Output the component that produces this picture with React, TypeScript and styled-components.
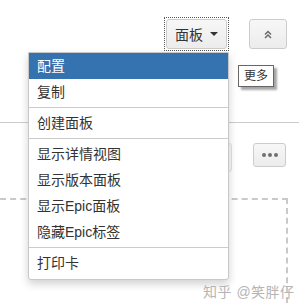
import React, { FC } from 'react';
import styled, { createGlobalStyle } from 'styled-components';

const GlobalStyle = createGlobalStyle`
    body {
        margin: 0;
        background: #ffffff;
        font-family: "Liberation Sans", "Noto Sans CJK SC", Arial, sans-serif;
        color: #333333;
    }
`;

const Page = styled.div`
    position: relative;
    width: 299px;
    height: 305px;
    overflow: hidden;
`;

const Header = styled.div`
    display: flex;
    justify-content: flex-end;
    align-items: flex-start;
    gap: 21px;
    height: 103px;
    padding: 19px 12px 0 0;
    border-bottom: 1px solid #cccccc;
`;

const Button = styled.button<{ $w: number; $h: number }>`
    box-sizing: border-box;
    width: ${(p) => p.$w}px;
    height: ${(p) => p.$h}px;
    display: flex;
    align-items: center;
    justify-content: center;
    gap: 7px;
    padding: 0;
    border: 1px solid #cccccc;
    border-radius: 3px;
    background: linear-gradient(#f7f7f7, #ececec);
    color: #333333;
    font-family: inherit;
    font-size: 14px;
`;

const Focused = styled.div`
    padding: 1px;
    margin-top: -1px;
    outline: 1px dotted #555555;
`;

const Caret = styled.span`
    width: 0;
    height: 0;
    border-left: 4px solid transparent;
    border-right: 4px solid transparent;
    border-top: 4px solid #333333;
`;

const Toolbar = styled.div`
    display: flex;
    justify-content: flex-end;
    align-items: flex-start;
    gap: 21px;
    padding: 20px 13px 0 0;
`;

const GhostInput = styled.div`
    box-sizing: border-box;
    width: 60px;
    height: 29px;
    border: 1px solid #e2e2e2;
    border-radius: 3px;
    background: #f8f8f8;
`;

const Dots = styled.span`
    display: flex;
    gap: 2px;

    i {
        width: 4px;
        height: 4px;
        border-radius: 50%;
        background: #707070;
    }
`;

const Board = styled.div`
    margin: 26px 11px 0 -10px;
    height: 200px;
    border: 2px dashed #c9c9c9;
`;

const Menu = styled.ul`
    position: absolute;
    top: 52px;
    left: 28px;
    box-sizing: border-box;
    width: 201px;
    margin: 0;
    padding: 0 0 3px;
    list-style: none;
    background: #ffffff;
    border: 1px solid #c8c8c8;
    border-radius: 0 0 3px 3px;
    box-shadow: 0 4px 8px rgba(0, 0, 0, 0.18);
`;

const Item = styled.li<{ $active?: boolean }>`
    height: 26px;
    line-height: 26px;
    padding: 0 8px;
    font-size: 14px;
    background: ${(p) => (p.$active ? '#3572b0' : 'transparent')};
    color: ${(p) => (p.$active ? '#ffffff' : '#333333')};
`;

const Divider = styled.li`
    height: 1px;
    margin: 2px 0;
    background: #cccccc;
`;

const Tip = styled.div`
    position: absolute;
    top: 65px;
    left: 238px;
    padding: 2px 5px;
    font-size: 12px;
    line-height: 16px;
    color: #333333;
    background: #ffffff;
    border: 1px solid #666666;
    box-shadow: 3px 3px 2px rgba(0, 0, 0, 0.35);
`;

const Watermark = styled.div`
    position: absolute;
    left: 203px;
    top: 281px;
    font-size: 14px;
    color: #b5b5b5;
    letter-spacing: 0.5px;
    text-shadow: 0 0 1px #ffffff;
`;

const ChevronsUp: FC = () => (
    <svg width="8" height="9" viewBox="0 0 8 9" fill="none" stroke="#6a6a6a" strokeWidth="1.5">
        <path d="M1 4.5 L4 1.5 L7 4.5" />
        <path d="M1 8 L4 5 L7 8" />
    </svg>
);

const items = [
    ['配置', '复制'],
    ['创建面板'],
    ['显示详情视图', '显示版本面板', '显示Epic面板', '隐藏Epic标签'],
    ['打印卡'],
];

const App: FC = () => (
    <Page>
        <GlobalStyle />
        <Header>
            <Focused>
                <Button $w={61} $h={30}>
                    面板 <Caret />
                </Button>
            </Focused>
            <Button $w={38} $h={30}>
                <ChevronsUp />
            </Button>
        </Header>
        <Toolbar>
            <GhostInput />
            <Button $w={33} $h={24}>
                <Dots>
                    <i />
                    <i />
                    <i />
                </Dots>
            </Button>
        </Toolbar>
        <Board />
        <Menu>
            {items.map((group, gi) => (
                <React.Fragment key={gi}>
                    {gi > 0 && <Divider />}
                    {group.map((label) => (
                        <Item key={label} $active={label === '配置'}>
                            {label}
                        </Item>
                    ))}
                </React.Fragment>
            ))}
        </Menu>
        <Tip>更多</Tip>
        <Watermark>知乎 @笑胖仔</Watermark>
    </Page>
);

export default App;
